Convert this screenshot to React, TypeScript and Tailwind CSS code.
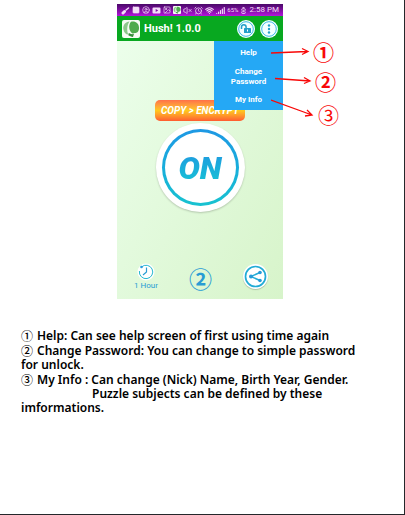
import type { ReactNode } from "react";
import {
  AlarmClock, BatteryCharging, CircleUser, Image, Signal, SquareMinus, VolumeX, Wifi,
} from "lucide-react";

const circled = "font-['Noto_Sans_CJK_KR',sans-serif]";

function StatusBar() {
  return (
    <div className="flex h-3 items-center justify-between bg-linear-to-b from-[#4a0868] to-[#b414dc] pl-1 pr-1 text-[#f3dcf8]">
      <svg width="9" height="9" viewBox="0 0 9 9" fill="none" stroke="currentColor" strokeLinecap="round">
        <path d="M2 7L3.5 5.5" strokeWidth="3" />
        <path d="M5 4L7.5 2" strokeWidth="1.5" />
      </svg>
      <SquareMinus size={8} fill="currentColor" />
      <CircleUser size={8} />
      <svg width="9" height="9" viewBox="0 0 9 9" fill="currentColor">
        <path fillRule="evenodd" d="M1.500 1.500h6a1 1 0 0 1 1 1v4a1 1 0 0 1-1 1h-6a1 1 0 0 1-1-1v-4a1 1 0 0 1 1-1ZM3.700 3v3L6.200 4.500Z" />
      </svg>
      <Image size={8} />
      <LeafLogo size={8} />
      <VolumeX size={9} />
      <AlarmClock size={9} />
      <Wifi size={9} strokeWidth={3} />
      <Signal size={9} strokeWidth={3} />
      <span className="text-[6px] leading-3">65%</span>
      <BatteryCharging size={7} className="-rotate-90" strokeWidth={3} />
      <span className="text-[8px] leading-3">2:58 PM</span>
    </div>
  );
}

function LeafLogo({ size }: { size: number }) {
  return (
    <svg width={size} height={size} viewBox="0 0 18 18" className="shrink-0">
      <rect width="18" height="18" rx="2" fill="#f6fbf4" />
      <path d="M7.500 1.500C3.500 1.800.8 5 1.300 9c.4 3.500 2.500 5.500 5 5.500C4.600 11 4.900 5 7.500 1.500Z" fill="#8cc78a" />
      <path d="M9 1.800c4.500-1 7.800 1.600 8 5.700.2 3.500-1.500 5.600-4 5.500l-2.500.5C7 11.500 6 5 9 1.800Z" fill="#4fab4d" />
      <path d="M6.800 13c1.500 1.200 3.500 1.500 5.200.8l-1 3.200c-1.800-.2-3.500-.8-4.700-1.700Z" fill="#348d38" />
    </svg>
  );
}

function RoundButton({ label, children }: { label: string; children: ReactNode }) {
  return (
    <button aria-label={label} className="flex size-[18px] items-center justify-center rounded-full bg-[#f4ffff]">
      {children}
    </button>
  );
}

function Header() {
  return (
    <header className="flex h-[25px] items-center bg-[#08a820] pl-[5px] pr-[5px]">
      <LeafLogo size={18} />
      <h1 className="ml-1 flex-1 pt-[2px] text-[11px] font-bold text-white">Hush! 1.0.0</h1>
      <div className="flex gap-[5px]">
        <RoundButton label="Unlock">
          <svg width="18" height="18" viewBox="0 0 18 18" fill="none" stroke="#229fc9">
            <circle cx="9" cy="9" r="7.300" stroke="#3ab8e4" />
            <path d="M4.500 9V7a2.300 2.300 0 0 1 4.600 0v1.500" strokeWidth="1.500" />
            <rect x="7" y="8" width="7" height="5" rx=".5" fill="#229fc9" stroke="none" />
            <path d="M10.500 9.500v2" stroke="#fff" />
          </svg>
        </RoundButton>
        <RoundButton label="More options">
          <svg width="18" height="18" viewBox="0 0 18 18" fill="#229fc9">
            <circle cx="9" cy="9" r="7.300" fill="none" stroke="#3ab8e4" />
            <circle cx="9" cy="5.500" r="1.200" />
            <circle cx="9" cy="9" r="1.200" />
            <circle cx="9" cy="12.500" r="1.200" />
          </svg>
        </RoundButton>
      </div>
    </header>
  );
}

function Menu() {
  return (
    <nav className="absolute right-0 top-[37px] flex h-[69px] w-[69px] flex-col items-center justify-between bg-[#25a8f5] pb-[5px] pt-[7px] text-[8px] font-bold leading-[10px] text-white">
      <button>Help</button>
      <button>Change<br />Password</button>
      <button>My Info</button>
    </nav>
  );
}

function Callouts() {
  return (
    <div className="absolute left-full top-0 text-[#f80808]">
      <svg width="80" height="130" viewBox="0 0 80 130" className="absolute -left-3 top-0 max-w-none" fill="none" stroke="currentColor" strokeWidth="1.300">
        <path d="M0 49L36 47.500M31 44.500l6 3-6 3" />
        <path d="M4 74.500l35 2.500M33 73.500l6 3.500-6 2.500" />
        <path d="M0 96l41 15M36 106l5 5-7 1" />
      </svg>
      <span className={`absolute left-[30px] top-[36px] text-[21px] font-bold leading-[22px] ${circled}`}>①</span>
      <span className={`absolute left-[32px] top-[66px] text-[21px] font-bold leading-[22px] ${circled}`}>②</span>
      <span className={`absolute left-[35px] top-[99px] text-[21px] leading-[22px] ${circled}`}>③</span>
    </div>
  );
}

function Phone() {
  return (
    <section className="relative flex h-[295px] w-[166px] flex-col bg-linear-to-br from-[#edffed] to-[#d7f4ca] font-['Roboto',sans-serif]">
      <StatusBar />
      <Header />
      <div className="flex flex-1 flex-col items-center pt-[59px]">
        <div className="flex h-[21px] w-[90px] items-center justify-center whitespace-nowrap rounded-[5px] bg-linear-to-b from-[#ff7048] via-[#ffc81c] to-[#ff5a30] text-[10px] font-bold italic text-white">
          COPY &gt; ENCRYPT
        </div>
        <button className="mt-[2px] flex size-[89px] items-center justify-center rounded-full bg-white shadow-[0_1px_2px_#00000033]">
          <span className="flex size-[77px] items-center justify-center rounded-full bg-linear-to-b from-[#1e98e4] to-[#18c2d0] p-[3px]">
            <span className="flex size-full items-center justify-center rounded-full bg-white">
              <span className="bg-linear-to-b from-[#2098e0] to-[#18c4d4] bg-clip-text px-1 text-[32px] font-black italic leading-[34px] text-transparent">ON</span>
            </span>
          </span>
        </button>
        <div className="mt-auto flex w-full items-end justify-between pb-2 pl-[17px] pr-[15px] text-[#289cd4]">
          <button className="flex flex-col items-center text-[8px] leading-[10px]">
            <svg width="18" height="18" viewBox="0 0 18 18" fill="none" stroke="#289cd4">
              <circle cx="9" cy="9" r="8.500" fill="#fff" stroke="none" />
              <path d="M4.500 4A6.700 6.700 0 1 1 2.400 8" stroke="#25b8d0" />
              <path d="M9.500 4.500V9L6 12" strokeWidth="1.200" />
              <circle cx="4.500" cy="4" r="1.300" fill="#289ce0" stroke="none" />
            </svg>
            1 Hour
          </button>
          <span className={`text-[23px] font-bold leading-[26px] ${circled}`}>②</span>
          <button aria-label="Share" className="mb-[2px] size-[25px] rounded-full bg-white shadow-[0_1px_1px_#00000033]">
            <svg width="25" height="25" viewBox="0 0 25 25" fill="#259bd8" stroke="#22acd6">
              <circle cx="12.500" cy="12.500" r="10" fill="none" strokeWidth="1.700" />
              <path d="M17 8.500l-9 4 9 4" fill="none" strokeWidth="1.500" />
              <circle cx="17" cy="8.500" r="1.800" stroke="none" />
              <circle cx="8" cy="12.500" r="2" stroke="none" />
              <circle cx="17" cy="16.500" r="1.800" stroke="none" />
            </svg>
          </button>
        </div>
      </div>
      <Menu />
      <Callouts />
    </section>
  );
}

function Note({ mark, children }: { mark: string; children: ReactNode }) {
  return (
    <p>
      <span className={`inline-block h-[14px] w-4 align-top font-medium ${circled}`}>{mark}</span>
      {children}
    </p>
  );
}

export default function App() {
  return (
    <main className="min-h-screen border-b border-r border-[#24272b] bg-white">
      <div className="flex justify-center pr-1 pt-1">
        <Phone />
      </div>
      <div className="mt-[30px] flex flex-col gap-px whitespace-nowrap pl-[21px] font-['Noto_Sans',sans-serif] text-[12px] font-semibold leading-[14px] text-black">
        <Note mark="①">Help: Can see help screen of first using time again</Note>
        <Note mark="②">Change Password: You can change to simple password<br />for unlock.</Note>
        <Note mark="③">
          My Info : Can change (Nick) Name, Birth Year, Gender.<br />
          <span className="pl-[71px]">Puzzle subjects can be defined by these</span><br />imformations.
        </Note>
      </div>
    </main>
  );
}
